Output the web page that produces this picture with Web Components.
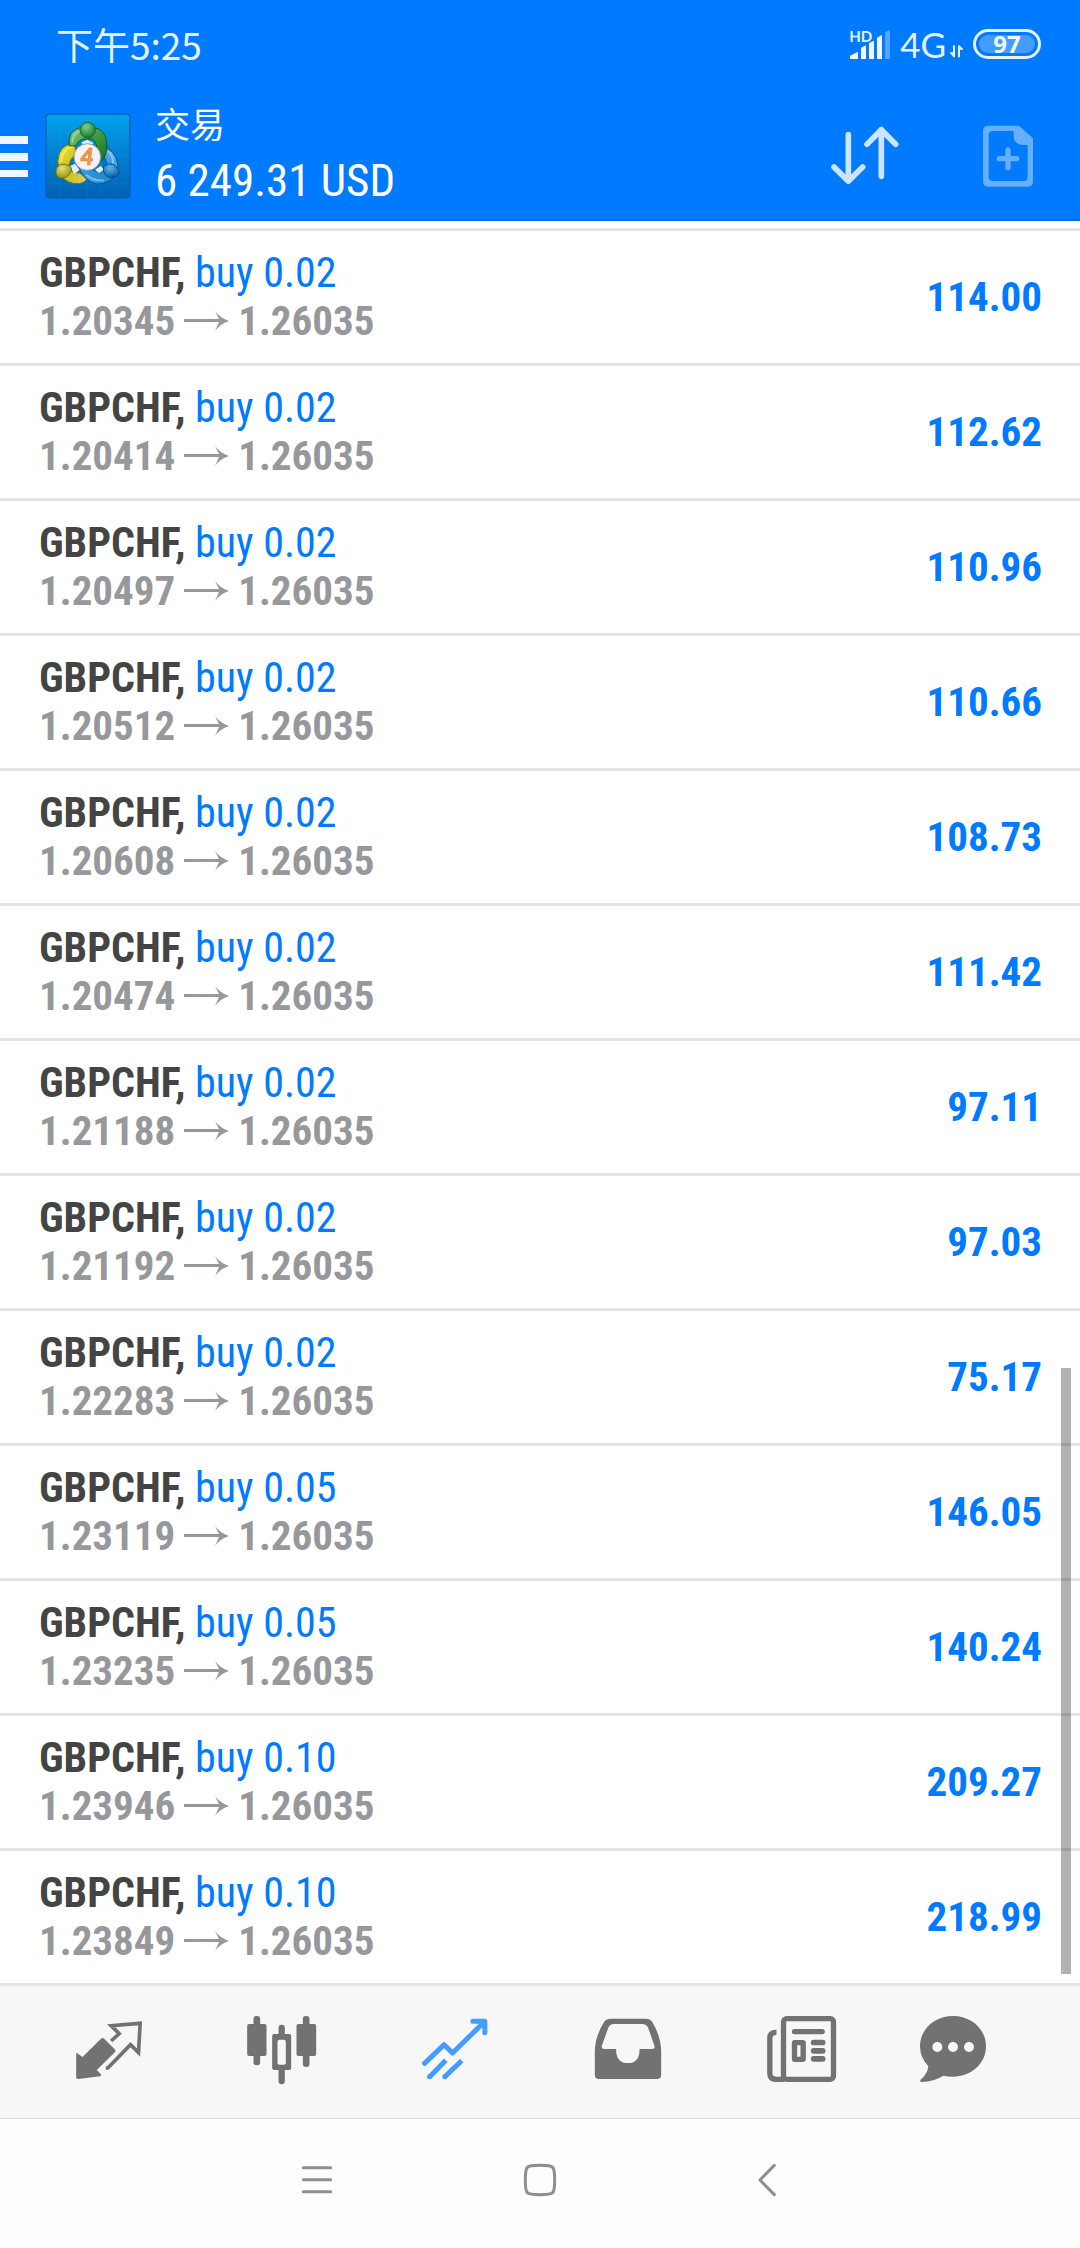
<!DOCTYPE html>
<html lang="zh-CN">
<head>
<meta charset="utf-8">
<meta name="viewport" content="width=device-width, initial-scale=1">
<title>交易</title>
<style>
  html, body { margin: 0; height: 100%; }
  body {
    --blue: #007aff;
    --line: #e4e4e4;
    font-family: "Roboto Condensed", "Liberation Sans Narrow", "Roboto", "Noto Sans CJK SC", sans-serif;
    background: #fff;
  }
</style>
</head>
<body>
<trade-app></trade-app>

<script>
const define = (name, html) => {
  const tpl = document.createElement('template');
  tpl.innerHTML = html;
  customElements.define(name, class extends HTMLElement {
    constructor() {
      super();
      this.attachShadow({ mode: 'open' }).append(tpl.content.cloneNode(true));
    }
  });
};

define('status-bar', `
<style>
  :host { display: flex; align-items: center; justify-content: space-between; box-sizing: border-box; height: 92px;
    padding: 0 39px 4px 56px; color: #e6f2ff; font-family: "Noto Sans CJK SC", sans-serif; font-weight: 400; }
  .time { font-size: 37px; line-height: 44px; }
  .right { display: flex; align-items: center; }
  .signal { display: grid; margin-right: 9px; }
  .signal > * { grid-area: 1 / 1; }
  .hd { font: 700 15px/16px "Lato", sans-serif; }
  .net { font: 400 35px/40px "Lato", sans-serif; }
  svg { display: block; }
  .data { margin: 14px 10px 0 4px; }
  .battery { box-sizing: border-box; width: 68px; height: 30px; border: 3px solid #e6f2ff; border-radius: 15px;
    padding: 3px; }
  .battery span { display: block; border-radius: 9px; background: #439cff; height: 18px;
    font: 700 24px/18px "Open Sans", sans-serif; text-align: center; color: #f0f7ff; }
</style>
<time class="time">下午5:25</time>
<div class="right">
  <div class="signal">
    <svg width="42" height="32" viewBox="147 81 126 96" fill="#f0f7ff" aria-hidden="true">
      <path d="M150 174v-10l24-12v22zM183 174v-34l15-7v41zM207 174v-48l15-7v55zM231 174v-64l15-8v72z"/>
      <path d="M255 174V94l15-8v88z" opacity=".35"/>
    </svg>
    <span class="hd">HD</span>
  </div>
  <span class="net">4G</span>
  <svg class="data" width="13" height="13" viewBox="450 134 39 39" fill="#e6f2ff" aria-hidden="true">
    <path d="M459 135h6v36h-4l-11-12v-3h9zM474 171v-36h4l11 10v3h-9v23z"/>
  </svg>
  <div class="battery"><span>97</span></div>
</div>`);

define('app-header', `
<style>
  :host { display: flex; align-items: center; height: 127px; padding-right: 36px; color: #fff; }
  button { display: block; border: 0; padding: 0; background: none; color: inherit; }
  svg { display: block; }
  .logo { margin: 0 24px 0 17px; }
  .titles { flex: 1; display: flex; flex-direction: column; gap: 6px; }
  .title { font: 400 35px/44px "Noto Sans CJK SC", sans-serif; margin: 0; }
  .balance { font-size: 45px; line-height: 60px; }
  .actions { display: flex; gap: 71px; }
</style>
<button aria-label="菜单"><svg width="28" height="42" viewBox="0 0 28 42" fill="#f0f6ff"><path d="M0 1h28v8H0zM0 18h28v8H0zM0 35h28v7H0z"/></svg></button>
<svg class="logo" width="86" height="86" viewBox="46 36 258 258" aria-hidden="true">
  <defs>
    <linearGradient id="bg" x1="0" y1="0" x2="0" y2="1"><stop offset="0" stop-color="#00a2ec"/><stop offset=".5" stop-color="#007fd0"/><stop offset="1" stop-color="#0062b4"/></linearGradient>
    <linearGradient id="g" x1="0" y1="0" x2="1" y2="1"><stop offset="0" stop-color="#8fd08a"/><stop offset=".5" stop-color="#3a9a3c"/><stop offset="1" stop-color="#156f1e"/></linearGradient>
    <linearGradient id="y" x1="0" y1="0" x2="1" y2="1"><stop offset="0" stop-color="#f7ee3a"/><stop offset=".5" stop-color="#c9bf1c"/><stop offset="1" stop-color="#d9cf6a"/></linearGradient>
    <linearGradient id="b" x1="1" y1="0" x2="0" y2="1"><stop offset="0" stop-color="#6cc4f4"/><stop offset=".5" stop-color="#1f86d0"/><stop offset="1" stop-color="#3fa6e8"/></linearGradient>
    <radialGradient id="gh" cx=".4" cy=".3" r=".7"><stop offset="0" stop-color="#7fd08c"/><stop offset="1" stop-color="#1c7a35"/></radialGradient>
    <radialGradient id="yh" cx=".4" cy=".3" r=".7"><stop offset="0" stop-color="#e8e070"/><stop offset="1" stop-color="#989510"/></radialGradient>
    <radialGradient id="bh" cx=".4" cy=".3" r=".7"><stop offset="0" stop-color="#5ab8ee"/><stop offset="1" stop-color="#0a5ca4"/></radialGradient>
  </defs>
  <rect x="49" y="39" width="252" height="252" rx="10" fill="url(#bg)" stroke="#0a5fb4" stroke-width="4"/>
  <path d="M90 42v246M131 42v246M173 42v246M214 42v246M256 42v246M52 82h246M52 123h246M52 165h246M52 206h246M52 247h246" stroke="#4db8f4" stroke-opacity=".16" stroke-width="2" fill="none"/>
  <path d="M134 128Q88 128 84 182L92 222Q112 250 150 248Q168 244 174 232L150 216Q120 218 118 196Q120 172 140 160Z" fill="url(#y)" stroke="#77700c" stroke-width="3"/>
  <path d="M146 196Q160 240 202 249Q242 250 264 214Q270 160 230 140L224 168Q232 180 230 200Q204 222 180 200Z" fill="url(#b)" stroke="#0a4f92" stroke-width="3"/>
  <path d="M118 134Q114 88 152 80H192Q232 84 232 136Q230 170 208 186L198 150Q206 126 188 114H158Q142 122 140 134Q126 136 118 134Z" fill="url(#g)" stroke="#11601a" stroke-width="3"/>
  <path d="M128 124Q128 100 150 90M94 180Q98 144 128 138M250 190Q250 162 236 152M170 222Q192 240 220 238" fill="none" stroke="#fff" stroke-opacity=".4" stroke-width="5" stroke-linecap="round"/>
  <path d="M156 124l17-8 18 10-6 10h-24zM120 196l16-8 14 18-16 14zM196 206l18-12 8 12-14 10z" fill="#e4efe6"/>
  <circle cx="174" cy="87" r="23" fill="url(#gh)" stroke="#17662a" stroke-width="3"/>
  <path d="M82 198Q92 186 106 190Q128 194 125 208Q118 230 96 232Q76 228 79 208Z" fill="url(#yh)" stroke="#77700c" stroke-width="3"/>
  <path d="M222 196Q236 184 252 190L270 210Q266 230 242 230Q218 226 222 196Z" fill="url(#bh)" stroke="#0a4f92" stroke-width="3"/>
  <circle cx="173" cy="168" r="40" fill="#f3f3f5" stroke="#9b9aa0" stroke-width="3"/>
  <text x="172" y="192" text-anchor="middle" font-family="Lato, sans-serif" font-weight="700" font-style="italic" font-size="70" fill="#f9a13a" stroke="#e0762a" stroke-width="2">4</text>
</svg>
<div class="titles">
  <h1 class="title">交易</h1>
  <span class="balance">6 249.31 USD</span>
</div>
<div class="actions">
  <button aria-label="排序"><svg width="72" height="72" viewBox="88 357 216 216" fill="none" stroke="#cce4ff" stroke-width="17" stroke-linecap="round" stroke-linejoin="round"><path d="M146 401V540M103 498L146 541L189 498M245 526V386M202 430L245 386L288 430"/></svg></button>
  <button aria-label="新订单"><svg width="72" height="72" viewBox="516 357 216 216" fill="#66afff"><path fill-rule="evenodd" d="M565 374H657L699 412V541Q699 557 683 557H565Q549 557 549 541V390Q549 374 565 374ZM578 390Q566 390 566 402V528Q566 540 578 540H671Q683 540 683 528V432H668Q641 430 641 404V390Z"/><path d="M624 447V500M598 473H650" stroke="#66afff" stroke-width="16" stroke-linecap="round"/></svg></button>
</div>`);

define('trade-row', `
<style>
  :host { display: flex; align-items: center; justify-content: space-between; height: 132px;
    padding: 0 38px 0 39px; border-bottom: 3px solid var(--line); font-size: 42px; line-height: 48px; }
  .deal { color: var(--blue); }
  .symbol { font-weight: 700; color: #444; }
  .prices { display: flex; align-items: center; gap: 9px; font-size: 41px; font-weight: 700; color: #97989c; }
  .profit { font-size: 41px; font-weight: 700; color: var(--blue); }
</style>
<div>
  <div class="deal"><span class="symbol"><slot name="symbol"></slot>,</span> <slot name="deal"></slot></div>
  <div class="prices"><slot name="open"></slot>
    <svg width="45" height="20" viewBox="0 0 45 20" fill="#97989c" role="img" aria-label="→"><path d="M0 8h35L31 0Q36 7 45 10Q36 13 31 20L35 11H0z"/></svg>
    <slot name="now"></slot></div>
</div>
<div class="profit"><slot name="profit"></slot></div>`);

customElements.define('trade-list', class extends HTMLElement {
  constructor() {
    super();
    const rows = [
      ['0.02', '1.20345', '114.00'], ['0.02', '1.20414', '112.62'], ['0.02', '1.20497', '110.96'],
      ['0.02', '1.20512', '110.66'], ['0.02', '1.20608', '108.73'], ['0.02', '1.20474', '111.42'],
      ['0.02', '1.21188', '97.11'], ['0.02', '1.21192', '97.03'], ['0.02', '1.22283', '75.17'],
      ['0.05', '1.23119', '146.05'], ['0.05', '1.23235', '140.24'], ['0.10', '1.23946', '209.27'],
      ['0.10', '1.23849', '218.99']
    ];
    this.attachShadow({ mode: 'open' }).innerHTML = `
<style>
  :host { display: block; position: relative; }
  .rows { border-top: 3px solid var(--line); margin-top: 7px; }
  .thumb { position: absolute; right: 9px; top: 65%; bottom: 12px; width: 10px; background: #000; opacity: .3; }
</style>
<div class="rows" role="list">${rows.map(([vol, open, profit]) => `
  <trade-row role="listitem"><span slot="symbol">GBPCHF</span><span slot="deal">buy ${vol}</span><span slot="open">${open}</span><span slot="now">1.26035</span><span slot="profit">${profit}</span></trade-row>`).join('')}
</div>
<div class="thumb"></div>`;
  }
});

define('tab-bar', `
<style>
  :host { display: block; background: #f7f7f7; border-bottom: 1px solid #dedede; }
  nav { display: flex; height: 132px; padding: 0 61px 0 22px; color: #727272; }
  a { flex: 173 1 0; display: grid; place-items: center; color: inherit; }
  a:last-child { flex-grow: 132; }
  a[aria-current] { color: #439cff; }
  svg { display: block; width: 72px; height: 72px; fill: currentColor; }
  .s { fill: none; stroke: currentColor; }
</style>
<nav>
  <a href="#quotes" aria-label="行情"><svg viewBox="37.5 48 216 216">
    <path d="M49 159L66 171L123 115Q127 112 131 116L164 149Q167 153 163 157L109 210L123 225Q122 228 118 229L54 237Q47 238 47 231V162Q47 158 49 159Z"/>
    <path class="s" stroke-width="11" d="M152 123L176 101L152 77L239 70L234 158L210 134L142 204H136"/></svg></a>
  <a href="#chart" aria-label="图表"><svg viewBox="556.5 48 216 216">
    <rect x="560" y="72" width="58" height="96" rx="6"/><rect x="579" y="48" width="20" height="148" rx="9"/>
    <rect x="708" y="72" width="59" height="96" rx="6"/><rect x="727" y="48" width="20" height="153" rx="9"/>
    <path d="M654 104V84a9 9 0 0 1 19 0V104zM654 208V243a9 9 0 0 0 19 0V208z"/>
    <path fill-rule="evenodd" d="M641 102H686Q692 102 692 108V204Q692 210 686 210H641Q635 210 635 204V108Q635 102 641 102ZM657 119Q651 119 651 126V188Q651 194 657 194H670Q676 194 676 188V126Q676 119 670 119Z"/></svg></a>
  <a href="#trade" aria-label="交易" aria-current="page"><svg viewBox="55.5 48 216 216">
    <g class="s" stroke-width="15"><path stroke-linecap="round" stroke-linejoin="round" d="M72 190L131 134L156 159L248 69M217 64H253V98"/><path d="M87 231L136 181M132 231L184 182"/></g>
    <circle cx="87" cy="230" r="7.5"/><circle cx="133" cy="230" r="7.5"/></svg></a>
  <a href="#history" aria-label="历史"><svg viewBox="574.5 48 216 216">
    <path fill-rule="evenodd" d="M628 56H738Q748 56 754 64Q782 110 782 155V225Q782 237 770 237H595Q583 237 583 225V155Q583 110 612 64Q618 56 628 56ZM640 72Q628 73 624 82L604 137Q602 146 610 147H647V155Q650 189 682 189Q714 189 717 155V147H756Q764 147 762 138L742 81Q738 73 728 72Z"/></svg></a>
  <a href="#news" aria-label="新闻"><svg viewBox="73.5 48 216 216">
    <g class="s" stroke-width="16"><rect x="129" y="56" width="150" height="182" rx="10"/><path d="M108 97Q88 97 88 114V220Q88 238 106 238H132"/><rect x="162" y="128" width="26" height="50" rx="1"/></g>
    <rect x="154" y="87" width="99" height="16" rx="8"/><rect x="211" y="119" width="44" height="17" rx="8"/><rect x="211" y="144" width="44" height="17" rx="8"/><rect x="211" y="168" width="44" height="17" rx="8"/></svg></a>
  <a href="#chat" aria-label="消息"><svg viewBox="531 48 216 216">
    <path fill-rule="evenodd" d="M639 48C695 48 738 88 738 139S695 230 639 230Q624 230 610 227Q582 245 546 246Q537 245 542 239Q563 222 565 199Q540 172 540 139C540 88 583 48 639 48ZM577 141a15 15 0 1 0 30 0a15 15 0 1 0-30 0zM624 141a15 15 0 1 0 30 0a15 15 0 1 0-30 0zM672 141a15 15 0 1 0 30 0a15 15 0 1 0-30 0z"/></svg></a>
</nav>`);

define('system-nav', `
<style>
  :host { display: flex; justify-content: center; box-sizing: border-box; height: 129px; padding-bottom: 7px; background: #fefefe; }
  button { flex: 0 1 225px; display: grid; place-items: center; border: 0; padding: 0; background: none; }
  svg { display: block; width: 48px; height: 48px; fill: none; stroke: #8e8e8e; stroke-width: 9; stroke-linecap: round; stroke-linejoin: round; }
</style>
<button aria-label="最近任务"><svg viewBox="3 18 144 144"><path d="M40 53H122M40 89H122M40 125H122"/></svg></button>
<button aria-label="主屏幕"><svg viewBox="678 18 144 144"><path d="M750 46Q782 46 788 52T794 90T788 128T750 134T712 128T706 90T712 52T750 46Z"/></svg></button>
<button aria-label="返回"><svg viewBox="1353 18 144 144"><path d="M1453 46L1410 90L1453 134"/></svg></button>`);

define('trade-app', `
<style>
  :host { display: flex; flex-direction: column; min-height: 100%; }
  header { background: var(--blue); border-bottom: 2px solid #006be0; }
  trade-list { flex: 1; }
</style>
<header><status-bar></status-bar><app-header></app-header></header>
<trade-list></trade-list>
<tab-bar></tab-bar>
<system-nav></system-nav>`);
</script>
</body>
</html>
